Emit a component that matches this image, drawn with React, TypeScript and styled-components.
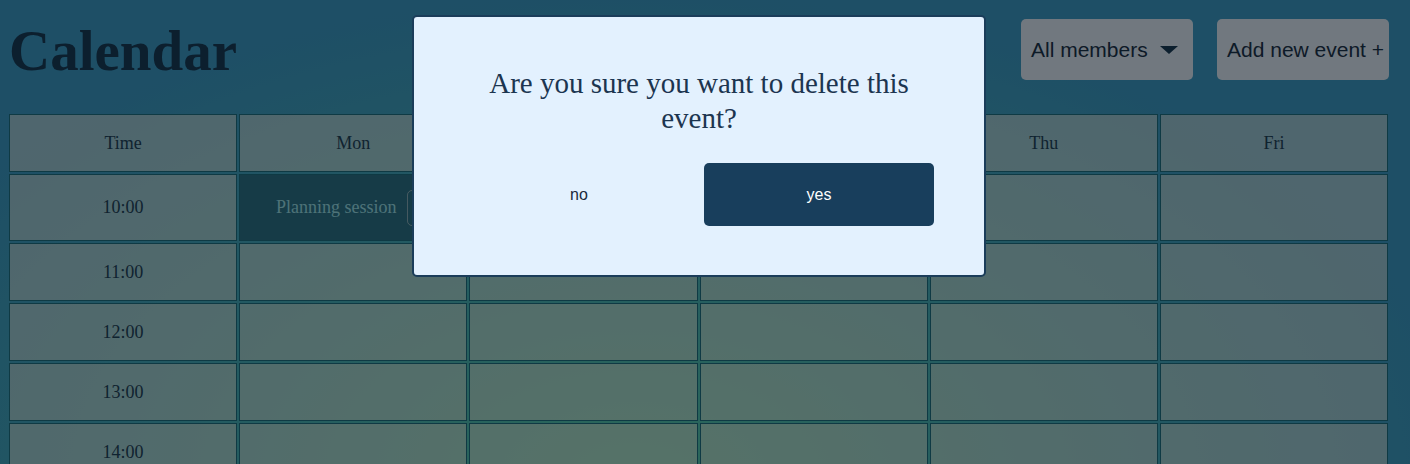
import React from 'react';
import styled, { createGlobalStyle } from 'styled-components';

const GlobalStyle = createGlobalStyle`
    html, body {
        margin: 0;
        padding: 0;
        overflow: hidden;
    }
    body {
        font-family: "Liberation Serif", "Times New Roman", serif;
    }
`;

const Page = styled.div`
    min-height: 100vh;
    box-sizing: border-box;
    padding: 19px 0 0 9px;
    background: radial-gradient(ellipse 70% 120% at 45% 100%, #58d2b4 0%, #46b2c4 50%, #3c9ecc 85%);
`;

const Header = styled.header`
    display: flex;
    justify-content: space-between;
    align-items: flex-start;
    width: 1380px;
    margin-bottom: 31px;
`;

const Title = styled.h1`
    margin: 0;
    font-size: 57px;
    line-height: 64px;
    font-weight: bold;
    color: #183e5c;
`;

const Actions = styled.div`
    display: flex;
    gap: 24px;
`;

const HeaderButton = styled.button`
    width: 172px;
    height: 61px;
    display: flex;
    align-items: center;
    padding: 0 10px;
    border: none;
    border-radius: 5px;
    background: #e3f1fe;
    color: #1b3650;
    font-family: "Liberation Sans", Arial, sans-serif;
    font-size: 21px;
    white-space: nowrap;
`;

const Caret = styled.span`
    width: 0;
    height: 0;
    margin-left: 12px;
    border-left: 9px solid transparent;
    border-right: 9px solid transparent;
    border-top: 8px solid #183e5c;
`;

const Grid = styled.div`
    display: grid;
    width: 1379px;
    grid-template-columns: repeat(6, 1fr);
    grid-template-rows: 58px 67px repeat(4, 58px);
    gap: 2px;
`;

const Cell = styled.div<{ $event?: boolean }>`
    display: flex;
    align-items: center;
    justify-content: center;
    gap: 10px;
    box-sizing: border-box;
    border: 1px solid #1e7488;
    background: ${p => (p.$event ? '#2c768e' : 'rgba(255, 250, 235, 0.5)')};
    color: ${p => (p.$event ? '#9ce4f0' : '#1f4660')};
    font-size: 18px;
`;

const DeleteButton = styled.button`
    width: 24px;
    height: 36px;
    padding: 0;
    border: 1px solid rgba(255, 255, 255, 0.45);
    border-radius: 5px;
    background: transparent;
    color: #9ce4f0;
    font-size: 14px;
`;

const Overlay = styled.div`
    position: fixed;
    inset: 0;
    display: flex;
    justify-content: center;
    align-items: flex-start;
    box-sizing: border-box;
    padding: 15px 12px 0 0;
    background: rgba(0, 0, 0, 0.5);
`;

const Dialog = styled.div`
    width: 574px;
    box-sizing: border-box;
    padding: 49px 50px;
    border: 2px solid #1b3d5a;
    border-radius: 5px;
    background: #e3f1fe;
    text-align: center;
`;

const DialogTitle = styled.h2`
    margin: 0 0 27px;
    font-size: 29px;
    line-height: 35px;
    font-weight: normal;
    color: #1c3550;
`;

const DialogButtons = styled.div`
    display: flex;
    justify-content: center;
    gap: 10px;
`;

const DialogButton = styled.button<{ $primary?: boolean }>`
    width: 230px;
    height: 63px;
    border: none;
    border-radius: 5px;
    background: ${p => (p.$primary ? '#183e5c' : 'transparent')};
    color: ${p => (p.$primary ? '#ffffff' : '#1a2a3a')};
    font-family: "Liberation Sans", Arial, sans-serif;
    font-size: 16px;
`;

const days = ['Mon', 'Tue', 'Wed', 'Thu', 'Fri'];
const hours = ['10:00', '11:00', '12:00', '13:00', '14:00'];

export default function App() {
    return (
        <>
            <GlobalStyle />
            <Page>
                <Header>
                    <Title>Calendar</Title>
                    <Actions>
                        <HeaderButton>
                            All members
                            <Caret />
                        </HeaderButton>
                        <HeaderButton>Add new event +</HeaderButton>
                    </Actions>
                </Header>
                <Grid>
                    <Cell>Time</Cell>
                    {days.map(d => (
                        <Cell key={d}>{d}</Cell>
                    ))}
                    {hours.map(h => (
                        <React.Fragment key={h}>
                            <Cell>{h}</Cell>
                            {days.map(d =>
                                h === '10:00' && d === 'Mon' ? (
                                    <Cell key={d} $event>
                                        Planning session
                                        <DeleteButton>×</DeleteButton>
                                    </Cell>
                                ) : (
                                    <Cell key={d} />
                                )
                            )}
                        </React.Fragment>
                    ))}
                </Grid>
            </Page>
            <Overlay>
                <Dialog>
                    <DialogTitle>Are you sure you want to delete this event?</DialogTitle>
                    <DialogButtons>
                        <DialogButton>no</DialogButton>
                        <DialogButton $primary>yes</DialogButton>
                    </DialogButtons>
                </Dialog>
            </Overlay>
        </>
    );
}
